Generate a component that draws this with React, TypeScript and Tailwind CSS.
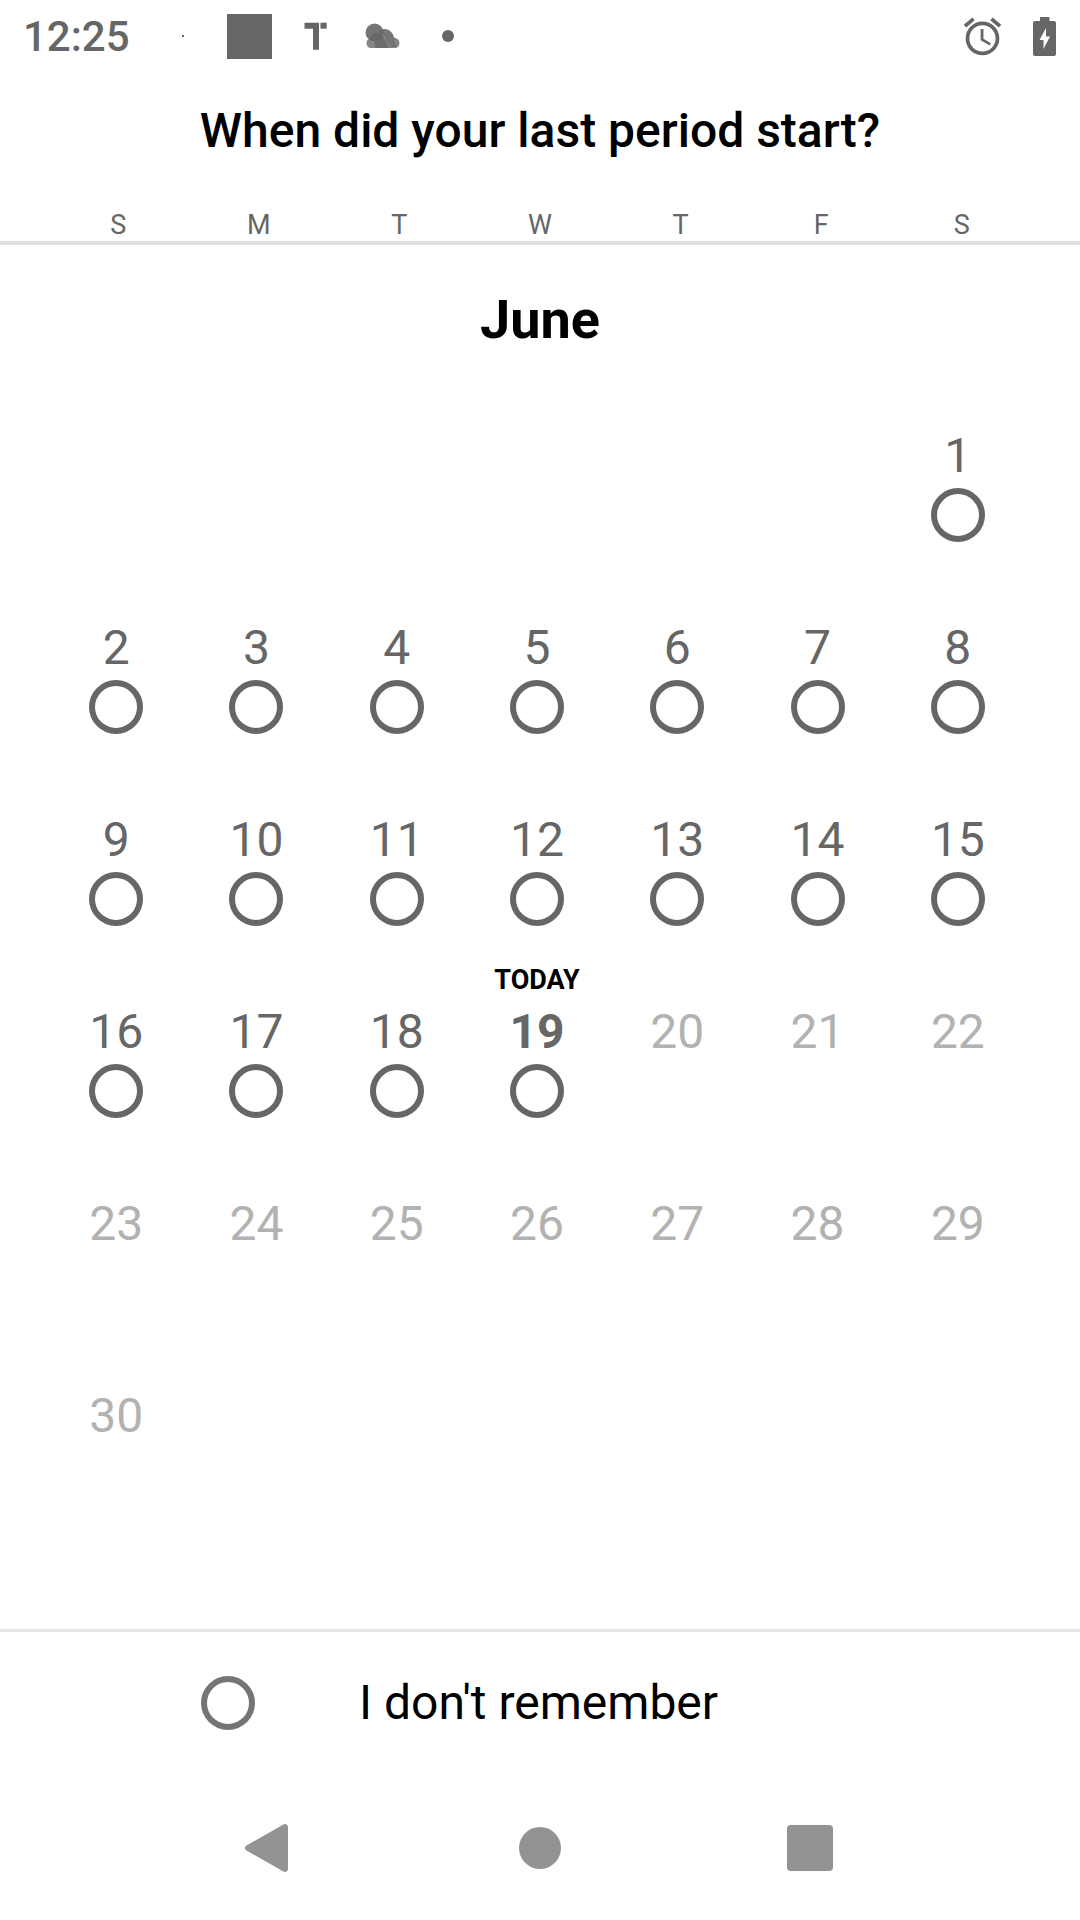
import React, { useState } from "react";
import { MdAlarm } from "react-icons/md";

const WEEKDAYS = ["S", "M", "T", "W", "T", "F", "S"];
const LEADING_BLANKS = 6;
const DAYS_IN_MONTH = 30;
const TODAY = 19;

function StatusBar() {
  return (
    <header className="flex h-[72px] items-center pr-6 pl-[23px] text-[#666666]">
      <time className="w-[107px] pt-0.5 text-[42px] leading-[48px] font-medium">12:25</time>
      <span className="ml-[52px] size-0.5 bg-current" />
      <span className="ml-[43px] size-[45px] bg-current" />
      <svg className="ml-8 h-[28px] w-[24px]" viewBox="0 0 24 28" fill="currentColor" aria-label="T">
        <path d="M0.500 0.700h14.500v27H9V6.700H0.500z" />
        <path d="M16.500 0.700H22.700V6.700H16.500z" />
      </svg>
      <svg className="ml-[37px] h-[26px] w-[35px]" viewBox="0 0 35 26" fill="currentColor" aria-label="Weather">
        <circle cx="9.500" cy="9.500" r="9" opacity="0.9" />
        <path d="M5 25a5 5 0 0 1 0-9.500C6 12 9 10 12 10c4 0 7 3 8 7.500L24 25z" opacity="0.8" />
        <path d="M10 25c-1-5 1-11 5-17.500 5-3.500 12-1 14 7 3 .5 5.500 2.500 5.500 5.500 0 3-2 5-5 5z" opacity="0.8" />
        <path d="M15 7.500C21 4.500 27 8 28.500 13c1 4 1.500 8 3.500 11-5 1.500-9-2-10.500-6-1.500-5-3-8-6.500-10.500z" opacity="0.5" />
      </svg>
      <span className="ml-[42px] size-3 rounded-full bg-current" />
      <div className="ml-auto flex items-center gap-[28px]">
        <MdAlarm size={45} aria-label="Alarm" />
        <svg className="h-[39px] w-[23px]" viewBox="0 0 23 39" fill="currentColor" aria-label="Battery charging">
          <path
            fillRule="evenodd"
            d="M7 0h9.500v4H21a2 2 0 0 1 2 2v31a2 2 0 0 1-2 2H2a2 2 0 0 1-2-2V6a2 2 0 0 1 2-2h5zM13 11L6.500 23h4v9L17 19.500h-4z"
          />
        </svg>
      </div>
    </header>
  );
}

type RadioProps = { className: string; checked: boolean; onChange: () => void };

function Radio({ className, checked, onChange }: RadioProps) {
  return (
    <input
      type="radio"
      name="period-start"
      checked={checked}
      onChange={onChange}
      className={`m-0 size-[54px] shrink-0 appearance-none rounded-full border-[6px] ${className}`}
    />
  );
}

type DayProps = { day: number; checked: boolean; onSelect: () => void };

function Day({ day, checked, onSelect }: DayProps) {
  const isToday = day === TODAY;
  if (day > TODAY) {
    return (
      <div className="flex h-[192px] flex-col items-center pt-10 text-5xl leading-[56px] text-[#b2b2b2]">{day}</div>
    );
  }
  return (
    <label className="flex h-[192px] flex-col items-center text-[#666666]">
      <span className="mb-2 h-8 text-[27px] leading-8 font-bold text-black">{isToday ? "TODAY" : ""}</span>
      <span className={isToday ? "mb-1 text-5xl leading-[56px] font-bold" : "mb-1 text-5xl leading-[56px]"}>{day}</span>
      <Radio className="border-[#666666] checked:bg-[#666666]" checked={checked} onChange={onSelect} />
    </label>
  );
}

function NavBar() {
  return (
    <nav className="grid h-36 grid-cols-3 px-[135px] text-[#939393]">
      <button type="button" aria-label="Back" className="flex items-center justify-center">
        <svg className="mr-2 h-12 w-[43px]" viewBox="0 0 43 48" fill="currentColor">
          <path d="M38 0.700C40.500-.8 43 .5 43 3.500v41c0 3-2.500 4.300-5 2.800L1.500 26.500c-2-1.300-2-3.700 0-5z" />
        </svg>
      </button>
      <button type="button" aria-label="Home" className="flex items-center justify-center">
        <span className="size-[42px] rounded-full bg-current" />
      </button>
      <button type="button" aria-label="Overview" className="flex items-center justify-center">
        <span className="size-[46px] rounded-[4px] bg-current" />
      </button>
    </nav>
  );
}

export default function App() {
  const [selected, setSelected] = useState<number | "unknown" | null>(null);
  const days = Array.from({ length: DAYS_IN_MONTH }, (_, i) => i + 1);

  return (
    <div className="flex min-h-screen flex-col bg-white font-[Roboto,sans-serif] text-black">
      <StatusBar />
      <h1 className="mt-[31px] text-center text-5xl leading-[56px] font-medium">When did your last period start?</h1>
      <div className="mt-[50px] grid grid-cols-7 border-b-4 border-[#e0e0e0] px-12 text-center text-[27px] leading-8 text-[#666666]">
        {WEEKDAYS.map((name, i) => (
          <span key={i}>{name}</span>
        ))}
      </div>
      <main className="flex-1">
        <h2 className="pt-[43px] pb-9 text-center text-[54px] leading-[64px] font-bold">June</h2>
        <div className="grid grid-cols-7 pr-[52px] pl-[46px]">
          {Array.from({ length: LEADING_BLANKS }, (_, i) => (
            <span key={`blank-${i}`} />
          ))}
          {days.map((day) => (
            <Day key={day} day={day} checked={selected === day} onSelect={() => setSelected(day)} />
          ))}
        </div>
      </main>
      <label className="flex items-center border-t-[3px] border-[#e5e5e5] pt-[43px] pb-[45px] pl-[201px] text-5xl leading-[56px]">
        <Radio
          className="border-[#757575] checked:bg-[#757575]"
          checked={selected === "unknown"}
          onChange={() => setSelected("unknown")}
        />
        <span className="ml-[104px]">I don&apos;t remember</span>
      </label>
      <NavBar />
    </div>
  );
}
